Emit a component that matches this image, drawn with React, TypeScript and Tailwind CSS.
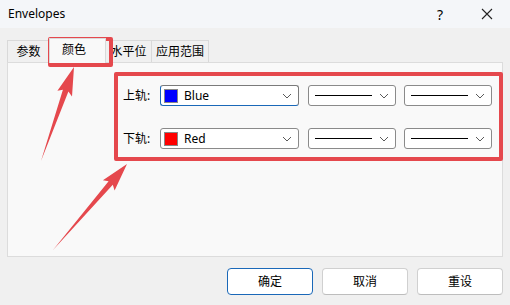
import React from "react";

const font = { fontFamily: '"Noto Sans", "Noto Sans CJK SC", sans-serif' };

function Chevron() {
  return (
    <svg width="10" height="6" viewBox="0 0 10 6" className="shrink-0">
      <path d="M1 1 L5 5 L9 1" fill="none" stroke="#5a5a5a" strokeWidth="1" />
    </svg>
  );
}

function ColorCombo({ color, name, focused }: { color: string; name: string; focused?: boolean }) {
  return (
    <div
      className={`flex items-center w-[139px] h-[21px] bg-white rounded-[3px] border pl-[3px] pr-[6px] ${
        focused ? "border-[#7a7a7a] border-b-[#1a68b8] border-l-[#1a68b8]" : "border-[#8a8a8a]"
      }`}
    >
      <div className="w-[14px] h-[14px] border border-[#888]" style={{ background: color }} />
      <span className="ml-[6px] text-[12px] text-black flex-1 leading-none">{name}</span>
      <Chevron />
    </div>
  );
}

function LineCombo() {
  return (
    <div className="flex items-center w-[88px] h-[21px] bg-white rounded-[3px] border border-[#8a8a8a] pl-[6px] pr-[6px]">
      <div className="w-[57px] h-px bg-black" />
      <div className="flex-1" />
      <Chevron />
    </div>
  );
}

function Row({ label, color, name, focused }: { label: string; color: string; name: string; focused?: boolean }) {
  return (
    <div className="flex items-center h-[21px]">
      <span className="w-[37px] text-[12px] text-black">{label}</span>
      <ColorCombo color={color} name={name} focused={focused} />
      <div className="ml-[9px]">
        <LineCombo />
      </div>
      <div className="ml-[8px]">
        <LineCombo />
      </div>
    </div>
  );
}

function Button({ text, primary }: { text: string; primary?: boolean }) {
  return (
    <div
      className={`w-[86px] h-[27px] flex items-center justify-center bg-white rounded-[4px] border text-[12px] text-black ${
        primary ? "border-[#1a68b8]" : "border-[#d0d0d0] border-b-[#bdbdbd]"
      }`}
    >
      {text}
    </div>
  );
}

export default function App() {
  return (
    <div className="relative w-[510px] h-[305px] bg-[#f0f0f0] overflow-hidden" style={font}>
      {/* title bar */}
      <div className="h-[28px] bg-[#f4f6f9] flex items-center pl-[8px]">
        <span className="text-[12px] text-black">Envelopes</span>
        <div className="flex-1" />
        <span className="text-[14px] text-black mr-[38px]">?</span>
        <svg width="12" height="12" viewBox="0 0 12 12" className="mr-[17px]">
          <path d="M1 1 L11 11 M11 1 L1 11" stroke="#222" strokeWidth="1.1" />
        </svg>
      </div>

      {/* tabs */}
      <div className="flex items-end h-[34px] pl-[7px] whitespace-nowrap text-[12px] text-black">
        <div className="w-[43px] h-[22px] border border-b-0 border-[#d9d9d9] flex items-center justify-center">
          参数
        </div>
        <div className="relative z-10 w-[57px] h-[25px] -mb-px -ml-px bg-[#f9f9f9] border border-b-0 border-[#d9d9d9] pl-[12px] pt-[2px]">
          颜色
        </div>
        <div className="w-[47px] h-[22px] -ml-px border border-b-0 border-[#d9d9d9] flex items-center justify-center">
          水平位
        </div>
        <div className="w-[58px] h-[22px] -ml-px border border-b-0 border-[#d9d9d9] flex items-center justify-center">
          应用范围
        </div>
      </div>

      {/* panel */}
      <div className="mx-[7px] h-[195px] bg-[#f9f9f9] border border-[#dcdcdc] pt-[22px] pl-[115px] flex flex-col gap-[22px]">
        <Row label="上轨:" color="#0000ff" name="Blue" focused />
        <Row label="下轨:" color="#ff0000" name="Red" />
      </div>

      {/* buttons */}
      <div className="flex justify-end gap-[9px] pr-[7px] mt-[11px]">
        <Button text="确定" primary />
        <Button text="取消" />
        <Button text="重设" />
      </div>

      {/* annotations */}
      <div className="absolute left-[48px] top-[37px] w-[65px] h-[30px] border-[4px] border-[#e5484d] rounded-[2px]" />
      <div className="absolute left-[114px] top-[72px] w-[389px] h-[89px] border-[4px] border-[#e5484d] rounded-[2px]" />
      <svg className="absolute left-0 top-0" width="510" height="305" viewBox="0 0 510 305">
        <polygon points="41,161 68.4,91.5 72,96.5 74,67 57.4,90.8 62.9,89.7" fill="#e5484d" />
        <polygon points="53,250 112.8,184.8 114.6,190.4 127,164 102.9,180.2 108.6,181.2" fill="#e5484d" />
      </svg>
    </div>
  );
}
